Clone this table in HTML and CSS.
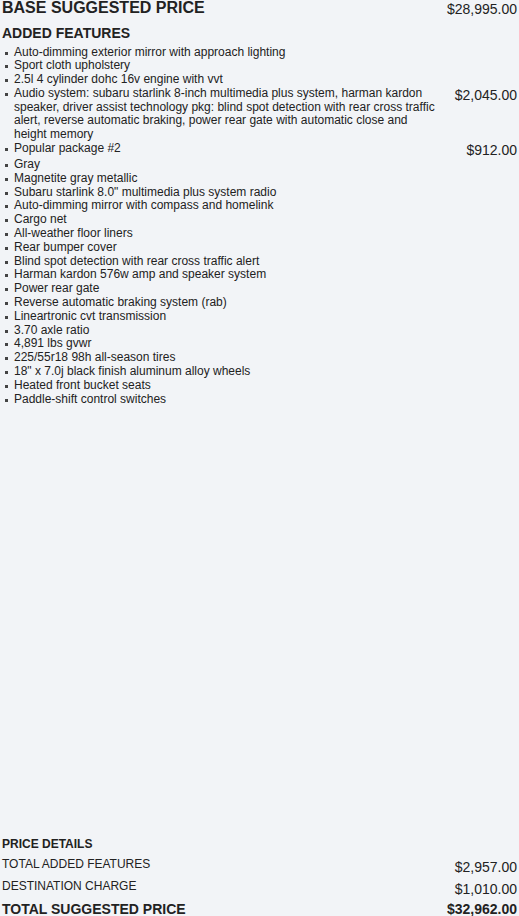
FILE: index.html
```html
<!DOCTYPE html>
<html lang="en">
<head>
    <meta charset="UTF-8">
    <meta name="viewport" content="width=device-width, initial-scale=1.0">
    <title>Price Summary</title>
    <link rel="stylesheet" href="styles.css">
</head>
<body>
    <div class="page">
        <div class="base-row">
            <h1 class="title">BASE SUGGESTED PRICE</h1>
            <span class="base-price">$28,995.00</span>
        </div>

        <h2 class="section-title">ADDED FEATURES</h2>
        <ul class="features">
            <li class="feature"><span class="desc">Auto-dimming exterior mirror with approach lighting</span></li>
            <li class="feature"><span class="desc">Sport cloth upholstery</span></li>
            <li class="feature"><span class="desc">2.5l 4 cylinder dohc 16v engine with vvt</span></li>
            <li class="feature">
                <span class="desc">Audio system: subaru starlink 8-inch multimedia plus system, harman kardon speaker, driver assist technology pkg: blind spot detection with rear cross traffic alert, reverse automatic braking, power rear gate with automatic close and height memory</span>
                <span class="price">$2,045.00</span>
            </li>
            <li class="feature">
                <span class="desc">Popular package #2</span>
                <span class="price">$912.00</span>
            </li>
            <li class="feature"><span class="desc">Gray</span></li>
            <li class="feature"><span class="desc">Magnetite gray metallic</span></li>
            <li class="feature"><span class="desc">Subaru starlink 8.0" multimedia plus system radio</span></li>
            <li class="feature"><span class="desc">Auto-dimming mirror with compass and homelink</span></li>
            <li class="feature"><span class="desc">Cargo net</span></li>
            <li class="feature"><span class="desc">All-weather floor liners</span></li>
            <li class="feature"><span class="desc">Rear bumper cover</span></li>
            <li class="feature"><span class="desc">Blind spot detection with rear cross traffic alert</span></li>
            <li class="feature"><span class="desc">Harman kardon 576w amp and speaker system</span></li>
            <li class="feature"><span class="desc">Power rear gate</span></li>
            <li class="feature"><span class="desc">Reverse automatic braking system (rab)</span></li>
            <li class="feature"><span class="desc">Lineartronic cvt transmission</span></li>
            <li class="feature"><span class="desc">3.70 axle ratio</span></li>
            <li class="feature"><span class="desc">4,891 lbs gvwr</span></li>
            <li class="feature"><span class="desc">225/55r18 98h all-season tires</span></li>
            <li class="feature"><span class="desc">18" x 7.0j black finish aluminum alloy wheels</span></li>
            <li class="feature"><span class="desc">Heated front bucket seats</span></li>
            <li class="feature"><span class="desc">Paddle-shift control switches</span></li>
        </ul>

        <!-- Price details pinned to the bottom -->
        <div class="summary">
            <h3 class="summary-title">PRICE DETAILS</h3>
            <div class="summary-row">
                <span class="label">TOTAL ADDED FEATURES</span>
                <span class="amount">$2,957.00</span>
            </div>
            <div class="summary-row">
                <span class="label">DESTINATION CHARGE</span>
                <span class="amount">$1,010.00</span>
            </div>
            <div class="summary-row total">
                <span class="label">TOTAL SUGGESTED PRICE</span>
                <span class="amount">$32,962.00</span>
            </div>
        </div>
    </div>
</body>
</html>
```

FILE: styles.css
```css
* {
    margin: 0;
    padding: 0;
    box-sizing: border-box;
}

body {
    background-color: #f2f4f7;
    color: #222;
    font-family: "Liberation Sans", Arial, Helvetica, sans-serif;
}

.page {
    min-height: 916px;
    display: flex;
    flex-direction: column;
    padding: 0 2px;
}

.base-row {
    display: flex;
    justify-content: space-between;
    align-items: flex-start;
}

.title {
    font-size: 16px;
    font-weight: bold;
    line-height: 15px;
}

.base-price {
    font-size: 14px;
    line-height: 15px;
    padding-top: 1.5px;
}

.section-title {
    font-size: 14px;
    font-weight: bold;
    margin-top: 8px;
}

.features {
    list-style: none;
    margin-top: 5px;
}

.feature {
    display: flex;
    align-items: flex-start;
    font-size: 12px;
    line-height: 13.8px;
}

.feature::before {
    content: "";
    flex: none;
    width: 3px;
    height: 3px;
    background-color: #444;
    margin: 6px 6px 0 3px;
}

.desc {
    flex: 1;
}

.price {
    font-size: 14px;
    line-height: 15px;
    white-space: nowrap;
    margin-left: 15px;
    padding-top: 1px;
}

.summary {
    margin-top: auto;
}

.summary-title {
    font-size: 12px;
    font-weight: bold;
    margin-bottom: 2px;
}

.summary-row {
    display: flex;
    justify-content: space-between;
    align-items: flex-start;
    font-size: 12px;
    padding-top: 4px;
}

.summary-row .amount {
    font-size: 14px;
    padding-top: 2px;
}

.summary-row.total {
    padding-top: 5px;
}

.summary-row.total .label,
.summary-row.total .amount {
    font-size: 14px;
    font-weight: bold;
    line-height: 14px;
    padding-top: 0;
}
```
